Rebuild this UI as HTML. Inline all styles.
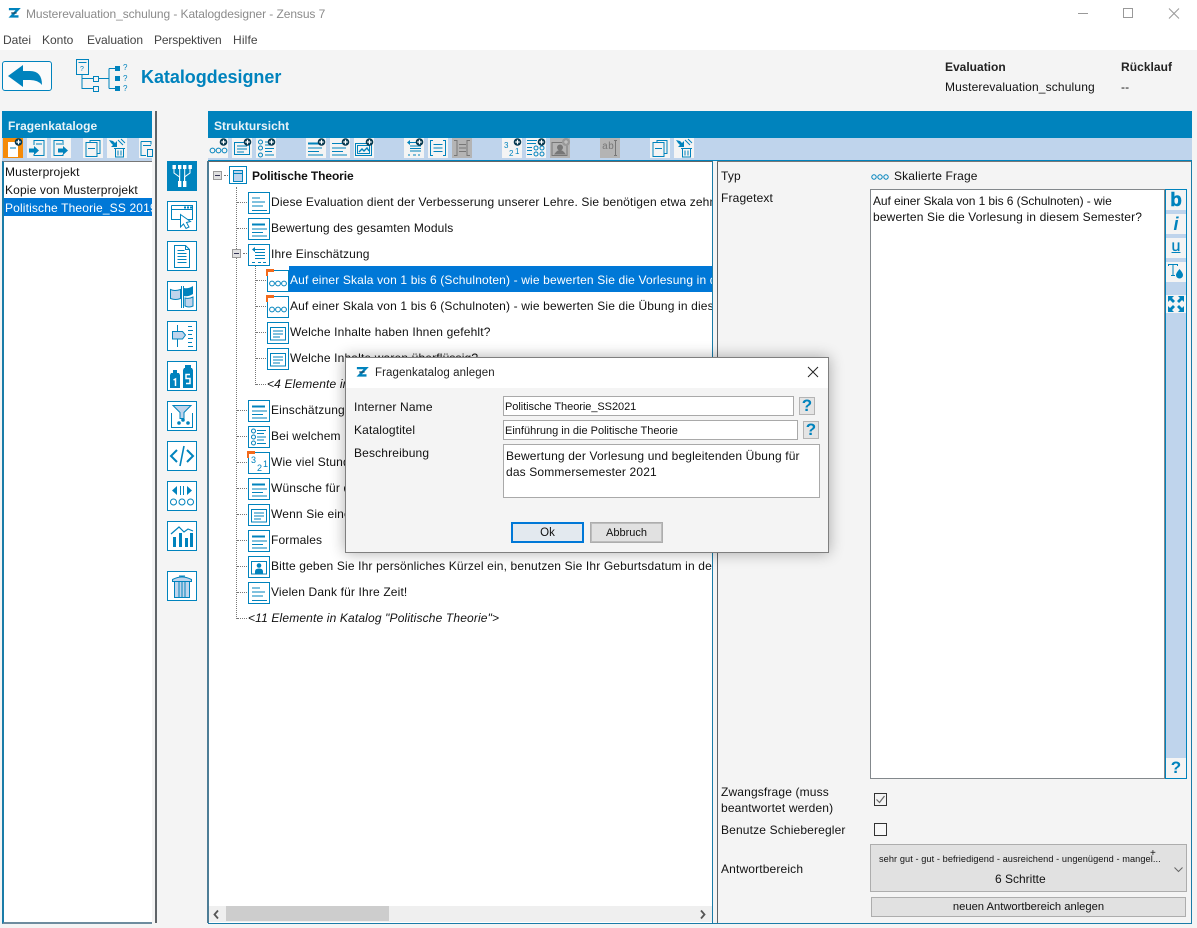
<!DOCTYPE html>
<html lang="de"><head><meta charset="utf-8"><title>Musterevaluation_schulung - Katalogdesigner - Zensus 7</title>
<style>
html,body{margin:0;padding:0;width:1197px;height:928px;overflow:hidden;background:#f4f4f4;font:12px "Liberation Sans",sans-serif;color:#111;letter-spacing:.15px}
.a{position:absolute}
.t{position:absolute;white-space:nowrap;line-height:16px}
.hd{position:absolute;background:#0083bd;color:#e9f3f8;font-weight:bold;font-size:12px;letter-spacing:.04px;line-height:16px}
.tb{position:absolute;background:#bfd4ec}
.b{position:absolute;width:20px;height:20px;background:#f4f4f4}
.b.g{background:#b4b4b4}
.b svg,.s svg,.i svg{display:block}
.s{position:absolute;left:167px;width:28px;height:28px;border:1px solid #0083bd;background:#fff}
.i{position:absolute;width:22px;height:22px}
svg{fill:none;stroke:#0083bd;stroke-width:1;overflow:visible}
.f{fill:#0083bd;stroke:none}
.inp{position:absolute;background:#fff;border:1px solid #a9a9a9;box-sizing:border-box;line-height:16px;padding:2px 1px 0;white-space:nowrap;letter-spacing:0}
.q{position:absolute;width:16px;height:18px;background:#e4e4e4;border:1px solid #b4b4b4;box-sizing:border-box;color:#0083bd;font:bold 17px/16px "Liberation Sans",sans-serif;text-align:center;letter-spacing:0}
.v{position:absolute;border-left:1px dotted #777}
.h{position:absolute;border-top:1px dotted #777;height:0}
.mm{position:absolute;width:7px;height:7px;border:1px solid #999;background:#e0e0e0;box-sizing:content-box}
.mm:after{content:"";position:absolute;left:1px;top:3px;width:5px;height:1px;background:#335}
.o{position:absolute;width:8px;height:7px;border-top:3px solid #f26a1b;border-left:2px solid #f26a1b;box-sizing:border-box}
.rb{position:absolute;left:1166px;width:20px;height:20px;background:#f4f4f4;color:#0083bd;text-align:center;letter-spacing:0}
.m{color:#444;letter-spacing:0}
</style></head><body>
<svg width="0" height="0" style="position:absolute"><defs>
<symbol id="pl" viewBox="0 0 20 20"><circle cx="15.500" cy="4" r="3.800" fill="#06384f" stroke="none"/><path d="M13.300 4h4.400M15.500 1.800v4.400" stroke="#fff" stroke-width="1.200"/></symbol>
<symbol id="ooo" viewBox="0 0 20 20"><circle cx="4.500" cy="12.500" r="2.400"/><circle cx="10.500" cy="12.500" r="2.400"/><circle cx="16.500" cy="12.500" r="2.400"/></symbol>
<symbol id="frm" viewBox="0 0 20 20"><path d="M2.500 4.500h15v12h-15zM5 8h10M5 11h10M5 14h7"/></symbol>
<symbol id="lst" viewBox="0 0 20 20"><circle cx="4.500" cy="4" r="2"/><circle cx="4.500" cy="10" r="2"/><circle cx="4.500" cy="17" r="2"/><path d="M9 4h9M9 7h7M9 10.500h9M9 13.500h7M9 17h9"/></symbol>
<symbol id="ht" viewBox="0 0 20 20"><path d="M2 5.500h13" stroke-width="2"/><path d="M2 10h14M2 13.500h11M2 17h15"/></symbol>
<symbol id="tx" viewBox="0 0 20 20"><path d="M2 5.500h10M2 10h14M2 13.500h11M2 17h15"/></symbol>
<symbol id="pic" viewBox="0 0 20 20"><path d="M1.500 5.500h16v12h-16zM3.500 7.500h12v8h-12z"/><path d="M5 14l3-3 2 2 3-3 2 3" stroke-width="1.400"/></symbol>
</defs></svg>

<!-- title bar -->
<div class="a" style="left:0;top:0;width:1197px;height:50px;background:#fff"></div>
<svg class="a" style="left:8px;top:8px" width="11" height="10" viewBox="0 0 14 13"><path d="M1 1.500h12L4 11h9.500" stroke="#0083bd" stroke-width="3"/><path d="M4 6.500h7" stroke="#13425f" stroke-width="1.600"/></svg>
<div class="t" style="left:26px;top:6px;color:#8b8b8b;font-size:12px;letter-spacing:-.08px">Musterevaluation_schulung - Katalogdesigner - Zensus 7</div>
<svg class="a" style="left:1078px;top:8px" width="110" height="12" viewBox="0 0 110 12"><path d="M0 5.500h10M45.500 .5h9v9h-9zM91 .5l10 10M101 .5l-10 10" stroke="#999" stroke-width="1"/></svg>
<div class="t m" style="left:3px;top:32px">Datei</div>
<div class="t m" style="left:42px;top:32px">Konto</div>
<div class="t m" style="left:87px;top:32px">Evaluation</div>
<div class="t m" style="left:154px;top:32px;letter-spacing:-.15px">Perspektiven</div>
<div class="t m" style="left:233px;top:32px;letter-spacing:.15px">Hilfe</div>

<!-- top header -->
<div class="a" style="left:2px;top:61px;width:48px;height:28px;border:1px solid #0083bd;border-radius:3px;background:#fbfbfb"></div>
<svg class="a" style="left:8px;top:64px" width="36" height="24" viewBox="0 0 36 24"><path class="f" d="M0 12 15 1v6h7q12 0 12 14-4-5-12-5h-7v7z"/></svg>
<svg class="a" style="left:75px;top:58px" width="52" height="36" viewBox="0 0 52 36"><path d="M1.500 1.500h12v15h-12zM3.500 4.500h8M7 16.500V30.500h11M7 20.500h11M24 20.500h10M34 10.500v20M34 10.500h6M34 30.500h6" stroke-width="1"/><path d="M18.500 18.500h5v5h-5zM18.500 28.500h5v5h-5z" stroke-width="1"/><path class="f" d="M40 8h5v5h-5zM40 18h5v5h-5zM40 28h5v5h-5z"/><text x="48" y="12" font-size="8" class="f" font-family="Liberation Sans">?</text><text x="48" y="23" font-size="8" class="f" font-family="Liberation Sans">?</text><text x="48" y="33" font-size="8" class="f" font-family="Liberation Sans">?</text><text x="5" y="13" font-size="7" class="f" font-family="Liberation Sans">?</text></svg>
<div class="t" style="left:141px;top:67px;font-size:18px;line-height:20px;font-weight:bold;color:#0083bd;letter-spacing:-.05px">Katalogdesigner</div>
<div class="t" style="left:945px;top:59px;font-weight:bold;color:#222;letter-spacing:0">Evaluation</div>
<div class="t" style="left:1121px;top:59px;font-weight:bold;color:#222;letter-spacing:.05px">Rücklauf</div>
<div class="t" style="left:945px;top:79px">Musterevaluation_schulung</div>
<div class="t" style="left:1121px;top:79px">--</div>

<!-- left panel -->
<div class="hd" style="left:2px;top:111px;width:150px;height:27px"><span style="position:absolute;left:6px;top:7px">Fragenkataloge</span></div>
<div class="tb" style="left:2px;top:138px;width:150px;height:23px"></div>
<div class="b" style="left:3px;top:138px;background:#f58a07"><svg width="20" height="20"><path d="M5 4h10v15H5z" stroke="none" fill="#fff"/><path d="M7 10h6"/><use href="#pl" width="20" height="20"/></svg></div>
<div class="b" style="left:27px;top:138px"><svg width="20" height="20"><path d="M7 7V2.500h10v15H7V16M9 6h6"/><path class="f" d="M2 10.500h5V8l5 4.500L7 17v-2.500H2z"/></svg></div>
<div class="b" style="left:51px;top:138px"><svg width="20" height="20"><path d="M12 7V2.500H3v15h9V16M5 6h6"/><path class="f" d="M7 10.500h5V8l5 4.500-5 4.500v-2.500H7z"/></svg></div>
<div class="b" style="left:83px;top:138px"><svg width="20" height="20"><path d="M7 4V2.500h10v13h-3M3 4.500h11v14H3zM5 10.500h7"/></svg></div>
<div class="b" style="left:107px;top:138px"><svg width="20" height="20"><path class="f" d="M2 2l4 1 2 2 2-2v6H4l2-2-2-2z"/><path d="M11 2l5 5M14 1l4 4M7 10.500h11M8.500 10.500v8.500h8v-8.500M11 12.500v5M14 12.500v5"/></svg></div>
<div class="b" style="left:139px;top:138px;width:13px"><svg width="13" height="20"><path d="M2 3.500h10v3M2 3.500v14h5M4 7.500h8M8.500 11.500h5v7h-5z"/></svg></div>
<div class="a" style="left:2px;top:161px;width:150px;height:763px;background:#fff;border-left:2px solid #1a7ca8;border-top:1px solid #777;border-bottom:2px solid #6e8c9e;box-sizing:border-box"></div>
<div class="t" style="left:5px;top:164px">Musterprojekt</div>
<div class="t" style="left:5px;top:182px">Kopie von Musterprojekt</div>
<div class="a" style="left:4px;top:198px;width:148px;height:18px;background:#0078d7;overflow:hidden"><span class="t" style="left:1px;top:2px;color:#fff">Politische Theorie_SS 2019</span></div>
<div class="a" style="left:155px;top:111px;width:2px;height:812px;background:#5f6468"></div>

<!-- side icons -->
<div class="s" style="top:161px;background:#0083bd"><svg width="28" height="28"><path d="M4.500 3h3.400v4H4.500zM10 3h3.400v4H10zM15 3h3.400v4H15zM20.500 3h3.400v4h-3.400z" fill="#fff" stroke="none"/><path d="M6 7v4l5.500 4v4M22 7v4l-5.500 4v4M11.700 7v12M16.700 7v12" stroke="#fff"/><path d="M10 19h3.400v6H10zM15 19h3.400v6H15z" fill="#fff" stroke="none"/></svg></div>
<div class="s" style="top:201px"><svg width="28" height="28"><path d="M3.500 3.500h21v14h-6M3.500 3.500v14h9M3.500 7.500h21"/><path class="f" d="M16 4.500h2v2h-2zM19 4.500h2v2h-2zM22 4.500h2v2h-2z"/><path d="M12.500 12.500l10 7-4 1 2.500 4.500-3 1.500-2.500-4.500-3 3z" fill="#fff"/></svg></div>
<div class="s" style="top:241px"><svg width="28" height="28"><path d="M6.500 3.500h11l4 4v18h-15zM17.500 3.500v4h4M9.500 8.500h7M9.500 11.500h9M9.500 14.500h9M9.500 17.500h9M9.500 20.500h9"/></svg></div>
<div class="s" style="top:281px"><svg width="28" height="28"><path d="M2.500 7.500q4 2 10 0v9q-5 2-10 0z" fill="#bfd4ec"/><path d="M13.500 4v22M15.500 4v22"/><path class="f" d="M16 6q4 1 9-2v8q-5 3-9 2z"/><path d="M17 16q4 1 8-1v9q-4 2-8 0z" fill="#bfd4ec"/></svg></div>
<div class="s" style="top:321px"><svg width="28" height="28"><path d="M9.500 3v6M9.500 17v8"/><path d="M4.500 9.500h10l3 3.500-3 4h-10z" fill="#bfd4ec"/><path d="M20 4.500h4M20 8.500h5M20 12.500h4M20 16.500h5M20 20.500h4M20 24.500h5"/></svg></div>
<div class="s" style="top:361px"><svg width="28" height="28"><path class="f" d="M5 8h4v3h2l1 2v13H2V13l1-2h2zM17 3h6v3h1l1 2v18H15V8l1-2h1z"/><path d="M5.500 18l2-1v7M22 12.500h-4v4h4v5h-4" stroke="#fff" stroke-width="1.500"/></svg></div>
<div class="s" style="top:401px"><svg width="28" height="28"><path d="M5 3.500h18l-7 7v6h-4v-6z" fill="#bfd4ec"/><path d="M3.500 11v14.500h21V11"/><circle class="f" cx="11" cy="21" r="1.800"/><circle class="f" cx="15" cy="18" r="1.800"/><circle class="f" cx="20" cy="21" r="1.800"/></svg></div>
<div class="s" style="top:441px"><svg width="28" height="28"><path d="M9 8l-6 6 6 6M19 8l6 6-6 6" stroke-width="2"/><path d="M16 4l-4 20" stroke-width="1.600"/></svg></div>
<div class="s" style="top:481px"><svg width="28" height="28"><path class="f" d="M9 4v9L4 8.500zM19 4v9l5-4.500z"/><path d="M12.500 4v9M15.500 4v9"/><circle cx="5.500" cy="20" r="3"/><circle cx="14" cy="20" r="3"/><circle cx="22.500" cy="20" r="3"/></svg></div>
<div class="s" style="top:521px"><svg width="28" height="28"><path class="f" d="M5 15h3v10H5zM11 11h3v14h-3zM17 16h3v9h-3zM22 11h3v14h-3z"/><path d="M3 12l8-7 5 5 4-3 5 2" stroke-width="1.200"/></svg></div>
<div class="s" style="top:571px"><svg width="28" height="28"><path d="M4.500 9.500h19v-2q-9.500-5-19 0zM6.500 9.500v16h15v-16" fill="#bfd4ec"/><path d="M11 10v15M14 10v15M17 10v15M11 4h6"/></svg></div>

<!-- structure panel -->
<div class="hd" style="left:208px;top:111px;width:984px;height:27px"><span style="position:absolute;left:6px;top:7px">Struktursicht</span></div>
<div class="tb" style="left:208px;top:138px;width:984px;height:22px"></div>
<div class="a" style="left:208px;top:160px;width:984px;height:1px;background:#0083bd"></div>

<div class="b" style="left:208px;top:138px"><svg width="20" height="20"><use href="#ooo" width="20" height="20"/><use href="#pl" width="20" height="20"/></svg></div>
<div class="b" style="left:232px;top:138px"><svg width="20" height="20"><use href="#frm" width="20" height="20"/><use href="#pl" width="20" height="20"/></svg></div>
<div class="b" style="left:256px;top:138px"><svg width="20" height="20"><use href="#lst" width="20" height="20"/><use href="#pl" width="20" height="20"/></svg></div>
<div class="b" style="left:306px;top:138px"><svg width="20" height="20"><use href="#ht" width="20" height="20"/><use href="#pl" width="20" height="20"/></svg></div>
<div class="b" style="left:330px;top:138px"><svg width="20" height="20"><use href="#tx" width="20" height="20"/><use href="#pl" width="20" height="20"/></svg></div>
<div class="b" style="left:354px;top:138px"><svg width="20" height="20"><use href="#pic" width="20" height="20"/><use href="#pl" width="20" height="20"/></svg></div>
<div class="b" style="left:404px;top:138px"><svg width="20" height="20"><path class="f" d="M3 4.500l3-2.500v5z"/><path d="M5 4.500h8M6 8h11M6 10.500h11M6 13h11M4 17h2M9 17h3M14 17h2"/><use href="#pl" width="20" height="20"/></svg></div>
<div class="b" style="left:428px;top:138px"><svg width="20" height="20"><path d="M5 2.500H2.500v15H5M15 2.500h2.500v15H15M5.500 6.500h9M5.500 10h9M5.500 13.500h9"/></svg></div>
<div class="b g" style="left:452px;top:138px"><svg width="20" height="20" style="stroke:#777"><path d="M2 2.500h3v15H2M18 2.500h-3v15h3M7 6.500h7M7 10h7M7 13.500h7"/></svg></div>
<div class="b" style="left:502px;top:138px"><svg width="20" height="20"><text x="2" y="10" font-size="8" class="f" font-family="Liberation Sans">3</text><text x="7" y="18" font-size="8" class="f" font-family="Liberation Sans">2</text><text x="13" y="16" font-size="8" class="f" font-family="Liberation Sans">1</text><use href="#pl" width="20" height="20"/></svg></div>
<div class="b" style="left:526px;top:138px"><svg width="20" height="20"><path d="M1 2.500h10M1 5.500h9M1 9.500h5M1 12.500h5M1 16.500h5"/><circle cx="10" cy="10" r="2"/><circle cx="16" cy="10" r="2"/><circle cx="10" cy="16" r="2"/><circle cx="16" cy="16" r="2"/><use href="#pl" width="20" height="20"/></svg></div>
<div class="b g" style="left:550px;top:138px"><svg width="20" height="20" style="stroke:#777"><path d="M2 4.500h15v13H2z"/><circle cx="10" cy="9.500" r="2.500" fill="#777"/><path d="M5 16q5-7 10 0z" fill="#777"/><circle cx="16" cy="4" r="4" fill="#999" stroke="none"/><path d="M14 4h4M16 2v4" stroke="#ccc"/></svg></div>
<div class="b g" style="left:600px;top:138px"><span class="t" style="left:2px;top:3px;color:#777;font:10px/14px 'Liberation Mono',monospace;letter-spacing:0">ab</span><svg width="20" height="20" style="stroke:#777"><path d="M14 2.500h3M14 17.500h3M15.500 2.500v15"/></svg></div>
<div class="b" style="left:650px;top:138px"><svg width="20" height="20"><path d="M7 4V2.500h10v13h-3M3 4.500h11v14H3zM5 10.500h7"/></svg></div>
<div class="b" style="left:674px;top:138px"><svg width="20" height="20"><path class="f" d="M2 2l4 1 2 2 2-2v6H4l2-2-2-2z"/><path d="M11 2l5 5M14 1l4 4M7 10.500h11M8.500 10.500v8.500h8v-8.500M11 12.500v5M14 12.500v5"/></svg></div>

<!-- tree -->
<div class="a" style="left:207px;top:161px;width:506px;height:762px;background:#fff;border-left:2px solid #4d7d96;border-right:1px solid #1a7ca8;border-top:1px solid #666;box-sizing:border-box"></div>
<div class="a" style="left:208px;top:923px;width:984px;height:1px;background:#1a7ca8"></div>
<div class="a" style="left:717px;top:161px;width:1px;height:762px;background:#5f6468"></div>
<div class="a" style="left:1191px;top:161px;width:1px;height:762px;background:#1a7ca8"></div>
<div class="a" style="left:717px;top:161px;width:474px;height:1px;background:#777"></div>

<div class="v" style="left:236px;top:187px;height:432px"></div>
<div class="v" style="left:255px;top:266px;height:119px"></div>
<div class="mm" style="left:213px;top:171px"></div><div class="h" style="left:224px;top:175px;width:4px"></div>
<div class="mm" style="left:232px;top:249px"></div><div class="h" style="left:243px;top:253px;width:4px"></div>
<div class="h" style="left:237px;top:202px;width:10px"></div>
<div class="h" style="left:237px;top:228px;width:10px"></div>
<div class="h" style="left:256px;top:280px;width:10px"></div>
<div class="h" style="left:256px;top:306px;width:10px"></div>
<div class="h" style="left:256px;top:332px;width:10px"></div>
<div class="h" style="left:256px;top:358px;width:10px"></div>
<div class="h" style="left:256px;top:384px;width:10px"></div>
<div class="h" style="left:237px;top:410px;width:10px"></div>
<div class="h" style="left:237px;top:436px;width:10px"></div>
<div class="h" style="left:237px;top:462px;width:10px"></div>
<div class="h" style="left:237px;top:488px;width:10px"></div>
<div class="h" style="left:237px;top:514px;width:10px"></div>
<div class="h" style="left:237px;top:540px;width:10px"></div>
<div class="h" style="left:237px;top:566px;width:10px"></div>
<div class="h" style="left:237px;top:592px;width:10px"></div>
<div class="h" style="left:237px;top:618px;width:10px"></div>

<div class="a" style="left:289px;top:266px;width:423px;height:26px;background:#0078d7"></div>

<div class="i" style="left:229px;top:166px"><svg width="18" height="18"><path d="M.5.500h17v17H.500z"/><path d="M4.500 4.500h9v11h-9z" fill="#bfd4ec"/><path d="M4.500 7.500h9"/></svg></div>

<div class="i" style="left:248px;top:192px"><svg width="22" height="22"><path d="M.5.500h21v21H.5zM4 6h8M4 10h13M4 14h11M4 18.500h15"/></svg></div>
<div class="i" style="left:248px;top:218px"><svg width="22" height="22"><path d="M.5.500h21v21H.5zM4 11h15M4 14.500h11M4 18h15"/><path d="M4 6.500h13" stroke-width="2"/></svg></div>
<div class="i" style="left:248px;top:244px"><svg width="22" height="22"><path d="M.5.500h21v21H.5zM7 5.500h10M7 8.500h10M7 11.500h10M7 14.500h10M4 18.500h3M10 18.500h3M15 18.500h3"/><path class="f" d="M4 5.500l3-2.500v5z"/></svg></div>
<div class="i" style="left:267px;top:270px;background:#fff"><svg width="22" height="22"><path d="M.5.500h21v21H.5z"/><circle cx="5" cy="13.500" r="2.400"/><circle cx="11" cy="13.500" r="2.400"/><circle cx="17" cy="13.500" r="2.400"/></svg></div><div class="o" style="left:266px;top:269px"></div>
<div class="i" style="left:267px;top:296px"><svg width="22" height="22"><path d="M.5.500h21v21H.5z"/><circle cx="5" cy="13.500" r="2.400"/><circle cx="11" cy="13.500" r="2.400"/><circle cx="17" cy="13.500" r="2.400"/></svg></div><div class="o" style="left:266px;top:295px"></div>
<div class="i" style="left:267px;top:322px"><svg width="22" height="22"><path d="M.5.500h21v21H.5zM3.500 5.500h15v12.500h-15zM6 9h10M6 12h10M6 15h7"/></svg></div>
<div class="i" style="left:267px;top:348px"><svg width="22" height="22"><path d="M.5.500h21v21H.5zM3.500 5.500h15v12.500h-15zM6 9h10M6 12h10M6 15h7"/></svg></div>
<div class="i" style="left:248px;top:400px"><svg width="22" height="22"><path d="M.5.500h21v21H.5zM4 11h15M4 14.500h11M4 18h15"/><path d="M4 6.500h13" stroke-width="2"/></svg></div>
<div class="i" style="left:248px;top:426px"><svg width="22" height="22"><path d="M.5.500h21v21H.5zM9 4.500h9M9 7.500h7M9 11h9M9 14h7M9 17.500h9"/><circle cx="5.500" cy="5" r="2"/><circle cx="5.500" cy="11" r="2"/><circle cx="5.500" cy="17" r="2"/></svg></div>
<div class="i" style="left:248px;top:452px"><svg width="22" height="22"><path d="M.5.500h21v21H.5z"/><text x="3" y="11" font-size="9" class="f" font-family="Liberation Sans">3</text><text x="9" y="19" font-size="9" class="f" font-family="Liberation Sans">2</text><text x="15" y="15" font-size="9" class="f" font-family="Liberation Sans">1</text></svg></div><div class="o" style="left:247px;top:451px"></div>
<div class="i" style="left:248px;top:478px"><svg width="22" height="22"><path d="M.5.500h21v21H.5zM4 11h15M4 14.500h11M4 18h15"/><path d="M4 6.500h13" stroke-width="2"/></svg></div>
<div class="i" style="left:248px;top:504px"><svg width="22" height="22"><path d="M.5.500h21v21H.5zM3.500 5.500h15v12.500h-15zM6 9h10M6 12h10M6 15h7"/></svg></div>
<div class="i" style="left:248px;top:530px"><svg width="22" height="22"><path d="M.5.500h21v21H.5zM4 11h15M4 14.500h11M4 18h15"/><path d="M4 6.500h13" stroke-width="2"/></svg></div>
<div class="i" style="left:248px;top:556px"><svg width="22" height="22"><path d="M.5.500h21v21H.5zM3.500 5.500h15v12.500h-15z"/><circle class="f" cx="11" cy="9.500" r="2.300"/><path class="f" d="M7 17.500v-2q0-3 4-3t4 3v2z"/></svg></div>
<div class="i" style="left:248px;top:582px"><svg width="22" height="22"><path d="M.5.500h21v21H.5zM4 6h8M4 10h13M4 14h11M4 18.500h15"/></svg></div>

<div class="a" style="left:209px;top:160px;width:503px;height:745px;overflow:hidden">
<span class="t" style="left:43px;top:8px;font-weight:bold;letter-spacing:-.1px">Politische Theorie</span>
<span class="t" style="left:62px;top:34px">Diese Evaluation dient der Verbesserung unserer Lehre. Sie benötigen etwa zehn Minuten</span>
<span class="t" style="left:62px;top:60px">Bewertung des gesamten Moduls</span>
<span class="t" style="left:62px;top:86px">Ihre Einschätzung</span>
<span class="t" style="left:81px;top:112px;color:#fff">Auf einer Skala von 1 bis 6 (Schulnoten) - wie bewerten Sie die Vorlesung in diesem Semester?</span>
<span class="t" style="left:81px;top:138px">Auf einer Skala von 1 bis 6 (Schulnoten) - wie bewerten Sie die Übung in diesem Semester?</span>
<span class="t" style="left:81px;top:164px">Welche Inhalte haben Ihnen gefehlt?</span>
<span class="t" style="left:81px;top:190px">Welche Inhalte waren überflüssig?</span>
<span class="t" style="left:58px;top:216px;font-style:italic">&lt;4 Elemente in Gruppe "Ihre Einschätzung"&gt;</span>
<span class="t" style="left:62px;top:242px">Einschätzung</span>
<span class="t" style="left:62px;top:268px">Bei welchem Lehrenden</span>
<span class="t" style="left:62px;top:294px">Wie viel Stunden</span>
<span class="t" style="left:62px;top:320px">Wünsche für die Zukunft</span>
<span class="t" style="left:62px;top:346px">Wenn Sie eine Anmerkung</span>
<span class="t" style="left:62px;top:372px">Formales</span>
<span class="t" style="left:62px;top:398px">Bitte geben Sie Ihr persönliches Kürzel ein, benutzen Sie Ihr Geburtsdatum in der Form</span>
<span class="t" style="left:62px;top:424px">Vielen Dank für Ihre Zeit!</span>
<span class="t" style="left:39px;top:450px;font-style:italic">&lt;11 Elemente in Katalog "Politische Theorie"&gt;</span>
</div>

<!-- scrollbar -->
<div class="a" style="left:209px;top:906px;width:503px;height:16px;background:#efefef"></div>
<div class="a" style="left:226px;top:906px;width:163px;height:15px;background:#cdcdcd"></div>
<svg class="a" style="left:213px;top:910px" width="496" height="9" viewBox="0 0 496 9"><path d="M5 .5 1.500 4.500 5 8.500M488 .5l3.500 4-3.500 4" stroke="#555" stroke-width="1.800"/></svg>

<!-- detail panel -->
<div class="t" style="left:721px;top:168px">Typ</div>
<svg class="a" style="left:871px;top:174px" width="18" height="6"><circle cx="3" cy="3" r="2.200"/><circle cx="9" cy="3" r="2.200"/><circle cx="15" cy="3" r="2.200"/></svg>
<div class="t" style="left:894px;top:168px">Skalierte Frage</div>
<div class="t" style="left:721px;top:190px">Fragetext</div>
<div class="a" style="left:870px;top:189px;width:295px;height:590px;background:#fff;border:1px solid #83888c;box-sizing:border-box;line-height:16px;padding:3px 2px;letter-spacing:-.09px;white-space:nowrap">Auf einer Skala von 1 bis 6 (Schulnoten) - wie<br><span style="letter-spacing:.15px">bewerten Sie die Vorlesung in diesem Semester?</span></div>
<div class="a" style="left:1165px;top:189px;width:22px;height:590px;background:#bfd4ec;border:1px solid #0083bd;box-sizing:border-box"></div>
<div class="rb" style="top:190px;font:bold 19px/21px 'Liberation Sans',sans-serif;-webkit-text-stroke:.5px #0083bd">b</div>
<div class="rb" style="top:214px;font:italic bold 18px/20px 'Liberation Sans',sans-serif">i</div>
<div class="rb" style="top:238px;font:16px/18px 'Liberation Sans',sans-serif;text-decoration:underline;-webkit-text-stroke:.3px #0083bd">u</div>
<div class="rb" style="top:262px"><svg width="20" height="20" style="display:block"><path d="M2.500 4V2.500h9V4M7 2.500V13M5 13.500h4"/><path class="f" d="M13.500 7q3.500 4 3.500 6a3.500 3.500 0 0 1-7 0q0-2 3.500-6z"/></svg></div>
<div class="rb" style="top:295px;height:18px"><svg width="20" height="18" style="display:block"><path class="f" d="M2 1h6L6 3l3 3-2 2-3-3-2 2zM18 1h-6l2 2-3 3 2 2 3-3 2 2zM2 17h6l-2-2 3-3-2-2-3 3-2-2zM18 17h-6l2-2-3-3 2-2 3 3 2-2z"/></svg></div>
<div class="rb" style="top:758px;font:bold 17px/20px 'Liberation Sans',sans-serif">?</div>

<div class="t" style="left:721px;top:784px">Zwangsfrage (muss</div>
<div class="t" style="left:721px;top:800px">beantwortet werden)</div>
<div class="a" style="left:874px;top:793px;width:13px;height:13px;border:1px solid #333;background:#f4f4f4;box-sizing:border-box"><svg width="11" height="11" style="display:block"><path d="M1.500 5.500l3 3 5-6.500" stroke="#666" stroke-width="1.200"/></svg></div>
<div class="t" style="left:721px;top:822px">Benutze Schieberegler</div>
<div class="a" style="left:874px;top:823px;width:13px;height:13px;border:1px solid #333;background:#f8f8f8;box-sizing:border-box"></div>
<div class="t" style="left:721px;top:861px">Antwortbereich</div>
<div class="a" style="left:870px;top:844px;width:317px;height:48px;background:#e1e1e1;border:1px solid #adadad;box-sizing:border-box"></div>
<div class="t" style="left:879px;top:851px;font-size:9.200px;letter-spacing:.08px">sehr gut - gut - befriedigend - ausreichend - ungenügend - mangel...</div>
<div class="t" style="left:1150px;top:846px;font-size:10px">+</div>
<div class="t" style="left:995px;top:871px;letter-spacing:0">6 Schritte</div>
<svg class="a" style="left:1174px;top:867px" width="10" height="6"><path d="M.5.500 4.500 4.500 8.500.5" stroke="#666" stroke-width="1"/></svg>
<div class="a" style="left:871px;top:897px;width:315px;height:20px;background:#e1e1e1;border:1px solid #adadad;box-sizing:border-box;text-align:center;line-height:19px;font-size:11.200px;letter-spacing:0">neuen Antwortbereich anlegen</div>

<!-- dialog -->
<div class="a" style="left:345px;top:357px;width:484px;height:196px;background:#f4f4f4;border:1px solid #7f7f7f;box-sizing:border-box;box-shadow:0 0 14px rgba(0,0,0,.32)"></div>
<div class="a" style="left:346px;top:358px;width:482px;height:30px;background:#fff"></div>
<svg class="a" style="left:356px;top:367px" width="11" height="10" viewBox="0 0 14 13"><path d="M1 1.500h12L4 11h9.500" stroke="#0083bd" stroke-width="3"/><path d="M4 6.500h7" stroke="#13425f" stroke-width="1.600"/></svg>
<div class="t" style="left:375px;top:365px;color:#222;font-size:11.500px;letter-spacing:.1px">Fragenkatalog anlegen</div>
<svg class="a" style="left:807px;top:366px" width="12" height="12"><path d="M1 1l10 10M11 1 1 11" stroke="#222" stroke-width="1"/></svg>
<div class="t" style="left:354px;top:399px">Interner Name</div>
<div class="t" style="left:354px;top:422px">Katalogtitel</div>
<div class="t" style="left:354px;top:445px">Beschreibung</div>
<div class="inp" style="left:503px;top:396px;width:291px;height:20px;font-size:11px;letter-spacing:-.05px">Politische Theorie_SS2021</div>
<div class="q" style="left:799px;top:397px">?</div>
<div class="inp" style="left:503px;top:420px;width:295px;height:20px;font-size:11px">Einführung in die Politische Theorie</div>
<div class="q" style="left:803px;top:421px">?</div>
<div class="inp" style="left:503px;top:444px;width:317px;height:54px;padding:3px 2px;white-space:nowrap;font-size:12px;letter-spacing:.15px">Bewertung der Vorlesung und begleitenden Übung für<br>das Sommersemester 2021</div>
<div class="a" style="left:511px;top:522px;width:73px;height:21px;background:#e3e9ef;border:1px solid #0078d7;box-shadow:inset 0 0 0 1px #0078d7;box-sizing:border-box;text-align:center;line-height:20px;font-size:11.500px;letter-spacing:0">Ok</div>
<div class="a" style="left:590px;top:522px;width:73px;height:21px;background:#e1e1e1;border:1px solid #adadad;box-shadow:inset 0 0 0 1px #bdbdbd;box-sizing:border-box;text-align:center;line-height:20px;font-size:11px;letter-spacing:0">Abbruch</div>
</body></html>
